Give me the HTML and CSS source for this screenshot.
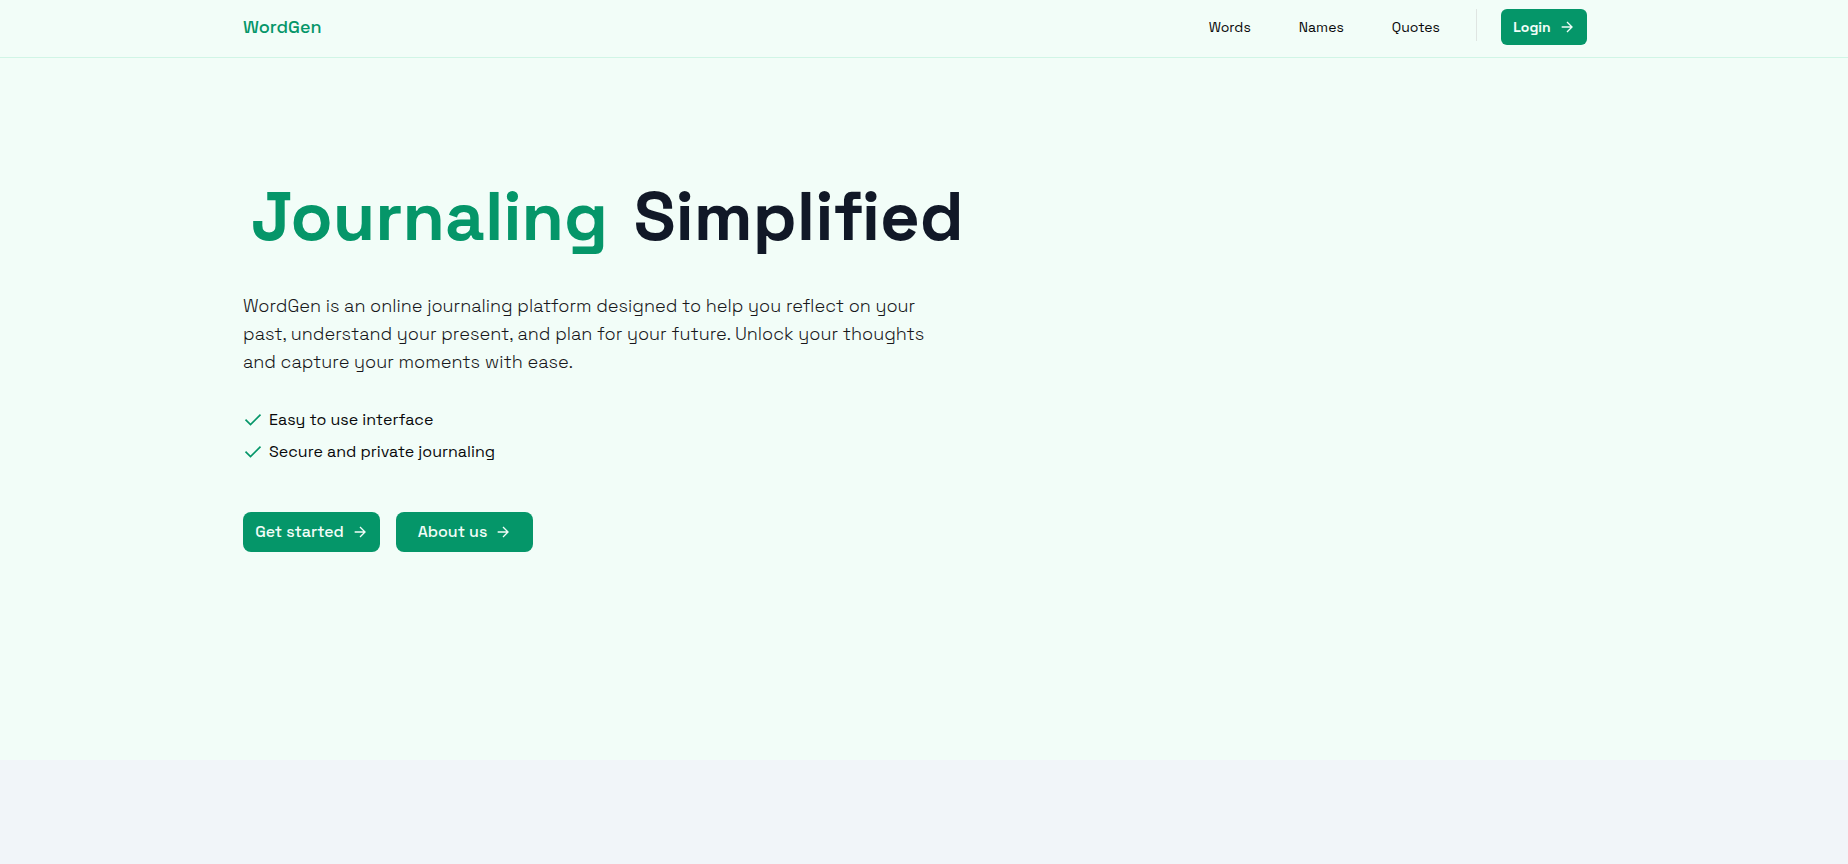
FILE: index.html
```html
<!DOCTYPE html>
<html lang="en">
<head>
  <meta charset="utf-8">
  <meta name="viewport" content="width=device-width, initial-scale=1">
  <title>WordGen</title>
  <link rel="stylesheet" href="styles.css">
</head>
<body>
  <header class="site-header">
    <div class="container header-inner">
      <a class="logo" href="#">WordGen</a>
      <nav class="nav">
        <a class="nav-link" href="#">Words</a>
        <a class="nav-link" href="#">Names</a>
        <a class="nav-link" href="#">Quotes</a>
        <span class="divider"></span>
        <button class="btn btn-small" type="button">Login
          <svg class="arrow" viewBox="0 0 24 24" aria-hidden="true"><path d="M4 12h15M12 4.5l7.500 7.500-7.500 7.500"/></svg>
        </button>
      </nav>
    </div>
  </header>
  <main class="hero">
    <div class="container">
      <h1 class="title"><span class="accent">Journaling</span> Simplified</h1>
      <p class="lead">WordGen is an online journaling platform designed to help you reflect on your past, understand your present, and plan for your future. Unlock your thoughts and capture your moments with ease.</p>
      <ul class="features">
        <li class="feature"><svg class="check" viewBox="0 0 24 24" aria-hidden="true"><path d="M3 11.500l6 6L21 5.500"/></svg>Easy to use interface</li>
        <li class="feature"><svg class="check" viewBox="0 0 24 24" aria-hidden="true"><path d="M3 11.500l6 6L21 5.500"/></svg>Secure and private journaling</li>
      </ul>
      <div class="actions">
        <button class="btn btn-large" type="button">Get started
          <svg class="arrow" viewBox="0 0 24 24" aria-hidden="true"><path d="M4 12h15M12 4.500l7.500 7.500-7.500 7.500"/></svg>
        </button>
        <button class="btn btn-large" type="button">About us
          <svg class="arrow" viewBox="0 0 24 24" aria-hidden="true"><path d="M4 12h15M12 4.500l7.500 7.500-7.500 7.500"/></svg>
        </button>
      </div>
    </div>
  </main>
  <section class="next-section"></section>
</body>
</html>
```
FILE: styles.css
```css
* {
  box-sizing: border-box;
}

body {
  margin: 0;
  min-height: 100vh;
  display: flex;
  flex-direction: column;
  background: #f2fdf8;
  color: #09090b;
  font-family: "Space Grotesk", Inter, "Open Sans", sans-serif;
}

.container {
  width: 100%;
  max-width: 1384px;
  margin: 0 auto;
  padding: 0 29px 0 11px;
}

.site-header {
  border-bottom: 1px solid #d1f5e6;
}

.header-inner {
  display: flex;
  align-items: flex-start;
  justify-content: space-between;
  height: 57px;
  padding-top: 9px;
}

.logo {
  color: #059669;
  font-size: 18px;
  font-weight: 500;
  line-height: 36px;
  text-decoration: none;
}

.nav {
  display: flex;
  align-items: center;
}

.nav-link {
  margin-right: 48px;
  color: #09090b;
  font-size: 14px;
  line-height: 36px;
  text-decoration: none;
}

.divider {
  width: 1px;
  height: 32px;
  margin: 0 24px 4px -12px;
  background: #dfe5e2;
}

.btn {
  display: flex;
  align-items: center;
  justify-content: center;
  gap: 8px;
  border: 0;
  background: #059669;
  color: #f2fdf8;
  font-family: inherit;
  cursor: pointer;
}

.btn-small {
  width: 86px;
  height: 36px;
  padding: 0;
  border-radius: 6px;
  font-size: 14px;
  font-weight: 600;
}

.btn-large {
  width: 137px;
  height: 40px;
  padding: 0 0 1px;
  border-radius: 8px;
  font-size: 16px;
  font-weight: 500;
}

.arrow,
.check {
  flex: none;
  fill: none;
  stroke: currentColor;
  stroke-width: 2;
}

.arrow {
  width: 16px;
  height: 16px;
}

.check {
  width: 20px;
  height: 20px;
  color: #059669;
}

.hero {
  height: 702px;
  padding-top: 122px;
}

.title {
  margin: 0;
  color: #111827;
  font-size: 69px;
  font-weight: 700;
  font-variant-ligatures: none;
  line-height: 72px;
}

.accent {
  padding: 0 8px;
  color: #059669;
}

.lead {
  max-width: 704px;
  margin: 40px 0 0;
  color: #18181b;
  font-size: 18px;
  font-weight: 300;
  line-height: 28px;
}

.features {
  display: grid;
  gap: 8px;
  margin: 32px 0 0;
  padding: 0;
  list-style: none;
}

.feature {
  display: flex;
  align-items: center;
  gap: 6px;
  font-size: 16px;
  line-height: 24px;
}

.actions {
  display: flex;
  gap: 16px;
  margin-top: 48px;
}

.next-section {
  flex: 1;
  background: #f1f5f9;
}
```
